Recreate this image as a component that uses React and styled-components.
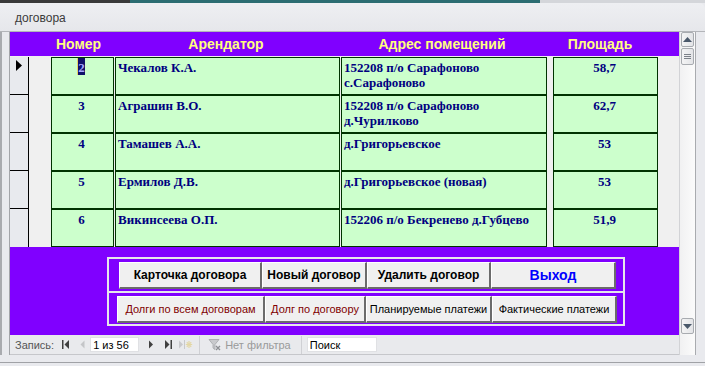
import React from 'react';
import styled, { createGlobalStyle } from 'styled-components';

const GlobalStyle = createGlobalStyle`
  html, body {
    margin: 0;
    padding: 0;
    background: #e9eaee;
  }
  body {
    width: 705px;
    height: 366px;
    overflow: hidden;
    font-family: 'Liberation Sans', Arial, sans-serif;
  }
`;

const Window = styled.div`
  width: 705px;
  height: 366px;
  display: flex;
  flex-direction: column;
  background: #e9eaee;
`;

const TopStrip = styled.div`
  height: 3px;
  background: linear-gradient(90deg, #3a3a3a 0 130px, #2c6d72 130px 540px, #d4d6da 540px);
`;

const TitleBar = styled.div`
  height: 29px;
  box-sizing: border-box;
  display: flex;
  align-items: center;
  padding: 2px 0 0 15px;
  background: linear-gradient(#eeeff2, #e6e7eb);
  border-bottom: 1px solid #b3b5b9;
  border-top-right-radius: 6px;
  font-size: 12px;
  color: #3a3a3a;
`;

const Main = styled.div`
  height: 323px;
  display: flex;
`;

const LeftEdge = styled.div`
  width: 10px;
  box-sizing: border-box;
  border-left: 2px solid #a9abaf;
  border-right: 1px solid #a3a5a9;
  background: #e9eaee;
`;

const FormArea = styled.div`
  width: 669px;
  display: flex;
  flex-direction: column;
`;

const Header = styled.div`
  height: 24px;
  background: #8000ff;
  display: grid;
  grid-template-columns: 31px 75px 220px 212px 104px 1fr;
  align-items: center;
`;

const HeadCell = styled.div`
  text-align: center;
  font-weight: bold;
  font-size: 14px;
  color: #ffff80;
  white-space: nowrap;
`;

const Detail = styled.div`
  height: 191px;
  box-sizing: border-box;
  padding-top: 1px;
  background: #f0f0f0;
  display: flex;
  flex-direction: column;
`;

const Row = styled.div`
  height: 38px;
  display: grid;
  grid-template-columns: 19px 22px 63px 1px 225px 1px 206px 6px 105px;
`;

const Selector = styled.div`
  box-sizing: border-box;
  background: #e8eaee;
  border-right: 1px solid #000;
  border-bottom: ${p => (p.$last ? 'none' : '1px solid #000')};
  display: flex;
  justify-content: center;
  padding-top: 3px;
`;

const Field = styled.div`
  box-sizing: border-box;
  background: #ccffcc;
  border: 1px solid #003300;
  padding: 2px 2px 0 ${p => (p.$align === 'left' ? 2 : 0)}px;
  text-align: ${p => p.$align || 'left'};
  font-family: 'Liberation Serif', 'Times New Roman', serif;
  font-weight: bold;
  font-size: 13px;
  line-height: 15px;
  color: #000080;
  overflow: hidden;
`;

const Selected = styled.span`
  background: #10106a;
  color: #a8a8ff;
  padding-top: 2px;
  box-shadow: -1px 0 0 #e6d36a;
`;

const Footer = styled.div`
  height: 88px;
  box-sizing: border-box;
  background: #8000ff;
  padding: 10px 0 0 97px;
`;

const Frame = styled.div`
  width: 518px;
  box-sizing: border-box;
  border: 2px solid #e6e6ea;
`;

const ButtonRow = styled.div`
  display: flex;
  padding: 3px 0 ${p => (p.$divider ? 2 : 1)}px ${p => p.$pl}px;
  border-bottom: ${p => (p.$divider ? '2px solid #e6e6ea' : 'none')};
`;

const Btn = styled.div`
  width: ${p => p.$w}px;
  height: 27px;
  box-sizing: border-box;
  background: #f0f0f0;
  border-style: solid;
  border-width: 1px 2px 2px 1px;
  border-color: #ffffff #6b6b6b #6b6b6b #ffffff;
  display: flex;
  align-items: center;
  justify-content: center;
  white-space: nowrap;
  overflow: hidden;
  font-size: ${p => p.$fs}px;
  font-weight: ${p => (p.$bold ? 'bold' : 'normal')};
  color: ${p => p.$color || '#000'};
`;

const NavBar = styled.div`
  height: 20px;
  box-sizing: border-box;
  display: flex;
  align-items: center;
  padding-left: 5px;
  background: #e9eaed;
  border-bottom: 1px solid #c6c7cb;
  font-size: 11px;
  color: #555;
`;

const NavLabel = styled.span`
  margin-right: ${p => p.$mr || 0}px;
  color: ${p => p.$muted ? '#9a9a9a' : '#555'};
  white-space: nowrap;
`;

const NavIcon = styled.svg`
  display: block;
  margin-right: ${p => p.$mr}px;
`;

const NavInput = styled.div`
  height: 15px;
  width: ${p => p.$w}px;
  box-sizing: border-box;
  background: #fff;
  border: 1px solid #e0e1e4;
  display: flex;
  align-items: center;
  padding-left: 2px;
  margin-right: ${p => p.$mr || 0}px;
  color: #000;
  font-size: 11px;
`;

const NavSep = styled.div`
  width: 1px;
  height: 18px;
  background: #cfd0d4;
  margin-right: ${p => p.$mr}px;
`;

const ScrollCol = styled.div`
  width: 16px;
  box-sizing: border-box;
  border-left: 1px solid #d2d3d6;
  background: linear-gradient(90deg, #f1f1f2, #fbfbfb);
  display: flex;
  flex-direction: column;
  padding: 0 1px 21px 1px;
`;

const ScrollBtn = styled.div`
  height: ${p => p.$h}px;
  margin-top: ${p => p.$mt || 0}px;
  box-sizing: border-box;
  border: 1px solid #a8abb0;
  border-radius: 2px;
  background: linear-gradient(90deg, #f4f4f5, #e3e4e7);
  display: flex;
  align-items: center;
  justify-content: center;
`;

const RightEdge = styled.div`
  width: 10px;
  box-sizing: border-box;
  border-left: 1px solid #a9abaf;
  background: #e9eaee;
`;

const BottomEdge = styled.div`
  height: 10px;
  background: linear-gradient(#e9eaee 0 7px, #a0a2a6 7px 8px, #e9eaee 8px);
`;

const rows = [
  { n: '2', name: 'Чекалов К.А.', addr: '152208 п/о Сарафоново с.Сарафоново', area: '58,7' },
  { n: '3', name: 'Аграшин В.О.', addr: '152208 п/о Сарафоново д.Чурилково', area: '62,7' },
  { n: '4', name: 'Тамашев А.А.', addr: 'д.Григорьевское', area: '53' },
  { n: '5', name: 'Ермилов Д.В.', addr: 'д.Григорьевское (новая)', area: '53' },
  { n: '6', name: 'Викинсеева О.П.', addr: '152206 п/о Бекренево д.Губцево', area: '51,9' },
];

const App = () => (
  <Window>
    <GlobalStyle />
    <TopStrip />
    <TitleBar>договора</TitleBar>
    <Main>
      <LeftEdge />
      <FormArea>
        <Header>
          <div />
          <HeadCell>Номер</HeadCell>
          <HeadCell>Арендатор</HeadCell>
          <HeadCell>Адрес помещений</HeadCell>
          <HeadCell>Площадь</HeadCell>
        </Header>
        <Detail>
          {rows.map((r, i) => (
            <Row key={r.n}>
              <Selector $last={i === rows.length - 1}>
                {i === 0 && (
                  <svg width="7" height="11" viewBox="0 0 7 11">
                    <polygon points="0,0 6,5.5 0,11" fill="#000" />
                  </svg>
                )}
              </Selector>
              <div />
              <Field $align="center">{i === 0 ? <Selected>{r.n}</Selected> : r.n}</Field>
              <div />
              <Field $align="left">{r.name}</Field>
              <div />
              <Field $align="left">{r.addr}</Field>
              <div />
              <Field $align="center">{r.area}</Field>
            </Row>
          ))}
        </Detail>
        <Footer>
          <Frame>
            <ButtonRow $pl={10} $divider>
              <Btn $w={143} $fs={12} $bold>Карточка договора</Btn>
              <Btn $w={105} $fs={12} $bold>Новый договор</Btn>
              <Btn $w={124} $fs={12} $bold>Удалить договор</Btn>
              <Btn $w={125} $fs={14} $bold $color="#0000ff">Выход</Btn>
            </ButtonRow>
            <ButtonRow $pl={8}>
              <Btn $w={148} $fs={11} $color="#800000">Долги по всем договорам</Btn>
              <Btn $w={101} $fs={11} $color="#800000">Долг по договору</Btn>
              <Btn $w={126} $fs={11}>Планируемые платежи</Btn>
              <Btn $w={125} $fs={11}>Фактические платежи</Btn>
            </ButtonRow>
          </Frame>
        </Footer>
        <NavBar>
          <NavLabel $mr={8}>Запись:</NavLabel>
          <NavIcon $mr={11} width="7" height="9" viewBox="0 0 7 9">
            <rect x="0" y="0" width="1.5" height="9" fill="#404040" />
            <polygon points="7,0 2.5,4.5 7,9" fill="#404040" />
          </NavIcon>
          <NavIcon $mr={5} width="5" height="9" viewBox="0 0 5 9">
            <polygon points="4.5,0.5 0.5,4.5 4.5,8.5" fill="#c4c5c8" />
          </NavIcon>
          <NavInput $w={49} $mr={10}>1 из 56</NavInput>
          <NavIcon $mr={12} width="4" height="9" viewBox="0 0 4 9">
            <polygon points="0,0.5 4,4.5 0,8.5" fill="#404040" />
          </NavIcon>
          <NavIcon $mr={7} width="7" height="9" viewBox="0 0 7 9">
            <polygon points="0,0 4.5,4.5 0,9" fill="#404040" />
            <rect x="5.5" y="0" width="1.5" height="9" fill="#404040" />
          </NavIcon>
          <NavIcon $mr={6} width="14" height="9" viewBox="0 0 14 9">
            <polygon points="0,0.5 4,4.5 0,8.5" fill="#c8c9cc" />
            <rect x="5" y="0" width="1" height="9" fill="#c8c9cc" />
            <g stroke="#e3d7a6" strokeWidth="1.2">
              <line x1="10" y1="1" x2="10" y2="8" />
              <line x1="6.8" y1="4.5" x2="13.2" y2="4.5" />
              <line x1="7.8" y1="2.2" x2="12.2" y2="6.8" />
              <line x1="12.2" y1="2.2" x2="7.8" y2="6.8" />
            </g>
          </NavIcon>
          <NavSep $mr={8} />
          <NavIcon $mr={4} width="13" height="13" viewBox="0 0 13 13">
            <path d="M1 1.5 H11 L7 6.5 V11.5 L5 10 V6.5 Z" fill="#c9cacd" stroke="#a4a6aa" strokeWidth="0.8" />
            <path d="M8 8 L12 12 M12 8 L8 12" stroke="#8d8f93" strokeWidth="1.3" />
          </NavIcon>
          <NavLabel $muted $mr={10}>Нет фильтра</NavLabel>
          <NavSep $mr={5} />
          <NavInput $w={70}>Поиск</NavInput>
        </NavBar>
      </FormArea>
      <ScrollCol>
        <ScrollBtn $h={15}>
          <svg width="9" height="5" viewBox="0 0 9 5">
            <polygon points="0,5 4.5,0 9,5" fill="#4a586a" />
          </svg>
        </ScrollBtn>
        <ScrollBtn $h={17} $mt={1}>
          <svg width="7" height="6" viewBox="0 0 7 6">
            <g stroke="#7b8088" strokeWidth="1">
              <line x1="0" y1="0.5" x2="7" y2="0.5" />
              <line x1="0" y1="2.5" x2="7" y2="2.5" />
              <line x1="0" y1="4.5" x2="7" y2="4.5" />
            </g>
          </svg>
        </ScrollBtn>
        <ScrollBtn $h={16} style={{ marginTop: 'auto' }}>
          <svg width="9" height="5" viewBox="0 0 9 5">
            <polygon points="0,0 9,0 4.5,5" fill="#4a586a" />
          </svg>
        </ScrollBtn>
      </ScrollCol>
      <RightEdge />
    </Main>
    <BottomEdge />
  </Window>
);

export default App;
